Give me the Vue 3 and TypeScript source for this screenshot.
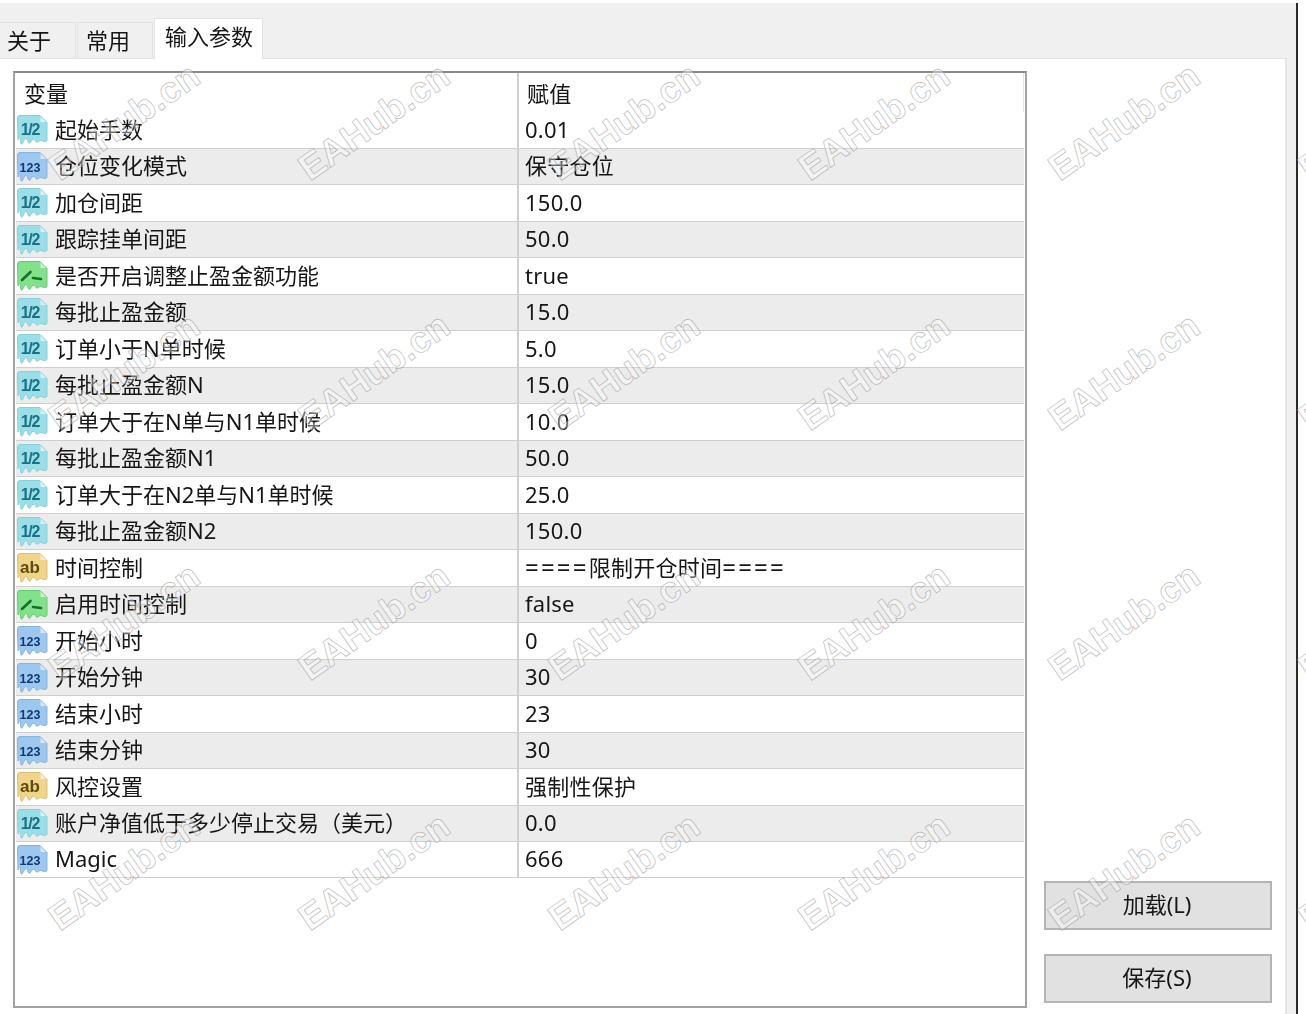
<script setup lang="ts">
type Kind = 'dbl' | 'int' | 'bool' | 'str'
interface Row { name: string; value: string; kind: Kind; fence?: boolean }

const rows: Row[] = [
  { name: '起始手数', value: '0.01', kind: 'dbl' },
  { name: '仓位变化模式', value: '保守仓位', kind: 'int' },
  { name: '加仓间距', value: '150.0', kind: 'dbl' },
  { name: '跟踪挂单间距', value: '50.0', kind: 'dbl' },
  { name: '是否开启调整止盈金额功能', value: 'true', kind: 'bool' },
  { name: '每批止盈金额', value: '15.0', kind: 'dbl' },
  { name: '订单小于N单时候', value: '5.0', kind: 'dbl' },
  { name: '每批止盈金额N', value: '15.0', kind: 'dbl' },
  { name: '订单大于在N单与N1单时候', value: '10.0', kind: 'dbl' },
  { name: '每批止盈金额N1', value: '50.0', kind: 'dbl' },
  { name: '订单大于在N2单与N1单时候', value: '25.0', kind: 'dbl' },
  { name: '每批止盈金额N2', value: '150.0', kind: 'dbl' },
  { name: '时间控制', value: '限制开仓时间', kind: 'str', fence: true },
  { name: '启用时间控制', value: 'false', kind: 'bool' },
  { name: '开始小时', value: '0', kind: 'int' },
  { name: '开始分钟', value: '30', kind: 'int' },
  { name: '结束小时', value: '23', kind: 'int' },
  { name: '结束分钟', value: '30', kind: 'int' },
  { name: '风控设置', value: '强制性保护', kind: 'str' },
  { name: '账户净值低于多少停止交易（美元）', value: '0.0', kind: 'dbl' },
  { name: 'Magic', value: '666', kind: 'int' },
]

const labels: Record<Kind, string> = { dbl: '1/2', int: '123', bool: '', str: 'ab' }
const marks = Array.from({ length: 24 }, (_, i) => i)
</script>

<template>
  <div class="page">
    <div class="window">
      <div class="tabs">
        <div class="tab first">关于</div>
        <div class="tab second">常用</div>
        <div class="tab active">输入参数</div>
      </div>
      <div class="panel">
        <div class="table">
          <div class="row head">
            <div class="name head-name">变量</div>
            <div class="value head-value">赋值</div>
          </div>
          <div v-for="(r, i) in rows" :key="i" class="row" :class="{ odd: i % 2 === 1 }">
            <div class="name">
              <svg class="icon" :class="r.kind" viewBox="0 0 32 32" width="32" height="32">
                <path class="doc" d="M1.500 4q0-2.500 2.500-2.500h20l7 7v18q-2 2-4.500.5t-4 .5-3.500-1-4 1-3.500-1-4 1-3-1-2.500-.5z" />
                <path class="fold" d="M24.500 2.500v5.500h5.500z" />
                <g v-if="r.kind === 'bool'" class="check">
                  <path d="M6 20 14.500 12" />
                  <path d="M17 18l8 1" />
                </g>
                <text v-else class="glyph" :class="r.kind" x="14" y="21" text-anchor="middle">{{ labels[r.kind] }}</text>
              </svg>
              <span>{{ r.name }}</span>
            </div>
            <div class="value">
              <span v-if="r.fence" class="fence">====</span>{{ r.value }}<span v-if="r.fence" class="fence">====</span>
            </div>
          </div>
        </div>
        <div class="side">
          <button class="btn" type="button">加载(L)</button>
          <button class="btn" type="button">保存(S)</button>
        </div>
      </div>
    </div>
    <div class="marks" aria-hidden="true">
      <div v-for="m in marks" :key="m" class="mark-cell"><span class="mark">EAHub.cn</span></div>
    </div>
  </div>
</template>

<style scoped>
.page {
  position: relative;
  width: 1306px;
  height: 1014px;
  overflow: hidden;
  background: #fff;
  padding-top: 3px;
  box-sizing: border-box;
  font-family: "Noto Sans", "Noto Sans CJK SC", sans-serif;
  font-size: 22px;
  color: #161616;
}
.window {
  width: 1298px;
  height: 1011px;
  box-sizing: border-box;
  background: #f0f0f0;
  border-right: 2px solid #2a2a2a;
  padding-right: 9px;
  display: flex;
  flex-direction: column;
  filter: blur(0.35px);
}
.tabs {
  height: 55px;
  display: flex;
  align-items: flex-end;
  flex: none;
}
.tab {
  width: 76px;
  height: 36px;
  margin-right: 1px;
  box-sizing: border-box;
  border: 1px solid #e2e2e2;
  border-bottom: none;
  background: #f0f0f0;
  display: flex;
  align-items: center;
  justify-content: flex-start;
  line-height: 1;
  padding: 0 0 2px 8px;
}
.tab.first {
  padding-left: 7px;
  border-left: none;
}
.tab.active {
  width: 109px;
  height: 41px;
  margin-bottom: -1px;
  background: #fff;
  padding: 0 0 6px 10px;
  position: relative;
  z-index: 1;
}
.panel {
  flex: 1;
  min-height: 0;
  box-sizing: border-box;
  background: #fff;
  border-top: 1px solid #e2e2e2;
  border-right: 2px solid #e6e6e6;
  padding: 12px 0 6px 13px;
  display: flex;
  gap: 17px;
}
.table {
  width: 1014px;
  flex: none;
  box-sizing: border-box;
  border: 2px solid #a2a2a2;
  border-top-color: #8a8a8a;
  padding: 0 1px;
  background: #fff;
}
.row {
  height: 36.5px;
  display: grid;
  grid-template-columns: 501px 1fr;
  box-sizing: border-box;
}
.row:last-child {
  border-bottom: 1px solid #cfcfcf;
}
.head {
  height: 38.75px;
  border-right: 1px solid #e4e4e4;
}
.odd {
  background: #ececec;
  border-top: 1px solid #cfcfcf;
  border-bottom: 1px solid #cfcfcf;
}
.name {
  display: flex;
  align-items: center;
  gap: 7px;
  white-space: nowrap;
  line-height: 1;
}
.name > span {
  padding-bottom: 3px;
}
.head-name {
  padding-left: 8px;
  padding-top: 1px;
}
.value {
  border-left: 2px solid #d0d0d0;
  padding: 0 0 3px 6px;
  display: flex;
  align-items: center;
  line-height: 1;
  white-space: nowrap;
  letter-spacing: 0.25px;
}
.head-value {
  padding: 1px 0 0 8px;
}
.fence {
  font-size: 24px;
  letter-spacing: 2.2px;
}
.icon {
  flex: none;
  display: block;
}
.doc {
  stroke-width: 1;
}
.fold {
  fill: #fff;
  opacity: 0.6;
}
.dbl .doc { fill: #9adfe8; stroke: #86d0da; }
.int .doc { fill: #9cc7ee; stroke: #86b4e0; }
.bool .doc { fill: #82e28c; stroke: #62cc70; }
.str .doc { fill: #efd48a; stroke: #dcbf70; }
.check {
  fill: none;
  stroke: #15702a;
  stroke-width: 2.6;
  stroke-linecap: round;
}
.glyph {
  font-family: "Liberation Sans", sans-serif;
  font-weight: 700;
}
.glyph.dbl {
  font-size: 16px;
  letter-spacing: -1.2px;
  fill: #1a7186;
}
.glyph.int {
  font-size: 12.5px;
  fill: #103a74;
}
.glyph.str {
  font-size: 17px;
  fill: #5f4a10;
}
.side {
  width: 228px;
  flex: none;
  display: flex;
  flex-direction: column;
  justify-content: flex-end;
  gap: 24px;
  padding-bottom: 5px;
  box-sizing: border-box;
  height: 100%;
}
.btn {
  height: 49px;
  width: 228px;
  box-sizing: border-box;
  border: 2px solid #b4b4b4;
  background: #e1e1e1;
  font: inherit;
  color: #161616;
  line-height: 1;
  padding: 0 2px 3px 0;
}
.marks {
  position: absolute;
  top: -3px;
  left: -1px;
  display: grid;
  grid-template-columns: repeat(6, 250px);
  grid-auto-rows: 250px;
  pointer-events: none;
  z-index: 2;
}
.mark-cell {
  display: flex;
  align-items: center;
  justify-content: center;
}
.mark {
  display: block;
  transform: rotate(-35deg);
  font-family: "Liberation Sans", sans-serif;
  font-weight: 700;
  font-size: 36.5px;
  color: rgba(255, 255, 255, 0.4);
  -webkit-text-stroke: 0.8px rgba(140, 140, 140, 0.55);
  white-space: nowrap;
}
</style>
